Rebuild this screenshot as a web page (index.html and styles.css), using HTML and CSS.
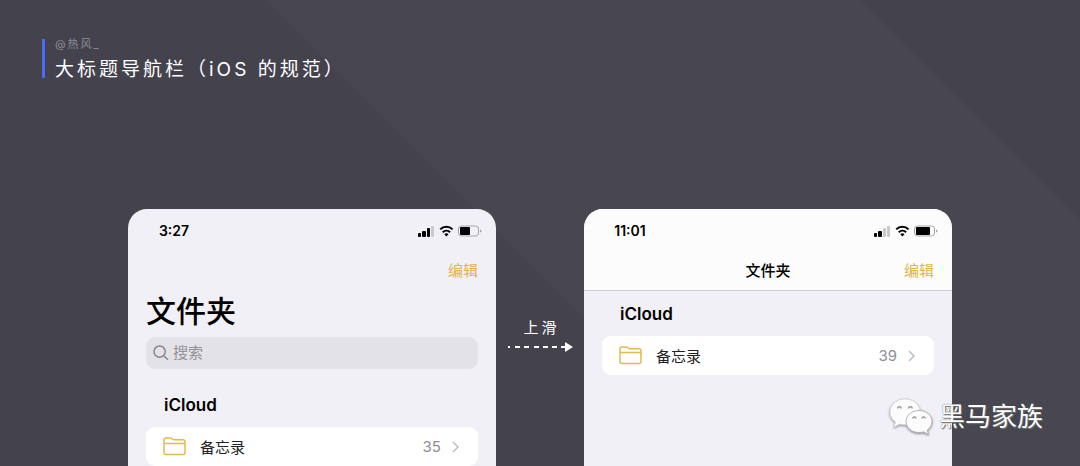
FILE: index.html
```html
<!DOCTYPE html>
<html lang="zh-CN">
<head>
    <meta charset="UTF-8">
    <meta name="viewport" content="width=device-width, initial-scale=1.0">
    <title>大标题导航栏</title>
    <link rel="stylesheet" href="styles.css">
</head>
<body>
    <header class="page-header">
        <p class="author">@热风_</p>
        <h1 class="page-title">大标题导航栏（iOS 的规范）</h1>
    </header>

    <main class="stage">
        <!-- large title -->
        <section class="phone">
            <div class="status-bar">
                <span class="time">3:27</span>
                <svg class="status-icons" width="64" height="12" viewBox="0 0 64 12">
                    <rect x="0" y="8" width="3" height="4" rx="1"/>
                    <rect x="4" y="6" width="4" height="6" rx="1"/>
                    <rect x="9" y="3" width="3" height="9" rx="1"/>
                    <rect class="bar-off" x="13" y="1" width="3" height="11" rx="1"/>
                    <path class="wifi" d="M22.2 4.4a8.8 8.8 0 0 1 12.4 0M24.7 7.2a5.3 5.3 0 0 1 7.4 0"/>
                    <path d="M26.3 9.3a3 3 0 0 1 4.2 0L28.4 11.6z"/>
                    <rect class="battery" x="40.5" y="1" width="20" height="10" rx="3"/>
                    <rect x="42" y="2" width="10" height="8" rx="1"/>
                    <path class="battery-tip" d="M62 4.5q1.5.4 1.5 1.500t-1.500 1.500z"/>
                </svg>
            </div>
            <div class="nav-bar">
                <button class="edit-btn" type="button">编辑</button>
            </div>
            <h2 class="large-title">文件夹</h2>
            <label class="search">
                <svg width="16" height="16" viewBox="0 0 16 16">
                    <circle cx="6.6" cy="6.6" r="5.6"/>
                    <path d="M10.7 10.7L15 14.8"/>
                </svg>
                <input type="search" placeholder="搜索" aria-label="搜索">
            </label>
            <h3 class="group-title">iCloud</h3>
            <a class="folder-row" href="#">
                <svg class="folder" width="23" height="19" viewBox="0 0 23 19">
                    <path d="M1 15.5V3q0-2 2-2h4.500q.8 0 1.400.6l.8.7q.5.5 1.300.5H20q2 0 2 2v10.700q0 2-2 2H3q-2 0-2-2zM1 6.500h21"/>
                </svg>
                <span class="folder-name">备忘录</span>
                <span class="count">35</span>
                <svg class="chevron" width="7" height="12" viewBox="0 0 7 12"><path d="M1 1l5 5-5 5"/></svg>
            </a>
        </section>

        <div class="swipe">
            <span class="swipe-text">上滑</span>
            <svg width="66" height="10" viewBox="0 0 66 10">
                <path class="dashes" d="M1 5h2M8 5h5M17 5h5M27 5h5M36 5h5M45 5h5M54 5h5"/>
                <path class="head" d="M58 0l8 5-8 5z"/>
            </svg>
        </div>

        <!-- collapsed title after scrolling -->
        <section class="phone">
            <div class="compact-header">
                <div class="status-bar">
                    <span class="time">11:01</span>
                    <svg class="status-icons" width="64" height="12" viewBox="0 0 64 12">
                        <rect x="0" y="8" width="3" height="4" rx="1"/>
                        <rect x="4" y="6" width="4" height="6" rx="1"/>
                        <rect class="bar-off" x="9" y="3" width="3" height="9" rx="1"/>
                        <rect class="bar-off" x="13" y="1" width="3" height="11" rx="1"/>
                        <path class="wifi" d="M22.2 4.4a8.8 8.8 0 0 1 12.4 0M24.7 7.2a5.3 5.3 0 0 1 7.4 0"/>
                        <path d="M26.3 9.3a3 3 0 0 1 4.2 0L28.4 11.6z"/>
                        <rect class="battery" x="40.5" y="1" width="20" height="10" rx="3"/>
                        <rect x="42" y="2" width="14" height="8" rx="1"/>
                        <path class="battery-tip" d="M62 4.5q1.5.4 1.5 1.500t-1.500 1.500z"/>
                    </svg>
                </div>
                <div class="nav-bar">
                    <h2 class="small-title">文件夹</h2>
                    <button class="edit-btn" type="button">编辑</button>
                </div>
            </div>
            <h3 class="group-title">iCloud</h3>
            <a class="folder-row" href="#">
                <svg class="folder" width="23" height="19" viewBox="0 0 23 19">
                    <path d="M1 15.5V3q0-2 2-2h4.500q.8 0 1.400.6l.8.7q.5.5 1.300.5H20q2 0 2 2v10.700q0 2-2 2H3q-2 0-2-2zM1 6.500h21"/>
                </svg>
                <span class="folder-name">备忘录</span>
                <span class="count">39</span>
                <svg class="chevron" width="7" height="12" viewBox="0 0 7 12"><path d="M1 1l5 5-5 5"/></svg>
            </a>
        </section>
    </main>

    <div class="watermark">
        <svg width="44" height="38" viewBox="0 0 44 38">
            <path class="bubble" d="M16 1C7.500 1 1 6.800 1 14c0 4.200 2.200 7.700 5.500 10L5 29l5.800-2.900c1.700.5 3.400.7 5.200.7 8.500 0 15-5.600 15-12.800S24.500 1 16 1z"/>
            <path class="eye" d="M8.600 10.500a1.800 1.800 0 0 1 3.600 0M19.600 10.500a1.800 1.800 0 0 1 3.600 0"/>
            <path class="bubble front" d="M30 12.500c-7.300 0-13 4.800-13 11s5.700 11 13 11c1.600 0 3.100-.2 4.500-.6l5 2.400-1.300-4.200c3-2 4.800-5.100 4.800-8.600 0-6.200-5.700-11-13-11z"/>
            <path class="eye" d="M23.800 20.500a1.600 1.600 0 0 1 3.200 0M33 20.500a1.600 1.600 0 0 1 3.200 0"/>
        </svg>
        <span>黑马家族</span>
    </div>
</body>
</html>
```
FILE: styles.css
```css
* { box-sizing: border-box; }
body {
    position: relative;
    display: flex;
    flex-direction: column;
    min-height: 100vh;
    margin: 0;
    font-family: Inter, "Noto Sans CJK SC", sans-serif;
    background: linear-gradient(45deg, #43424d 517px, #474651 517px, #474651 938px, #43424d 938px);
}
h1, h2, h3, p { margin: 0; }

.page-header {
    height: 39px;
    margin: 39px 42px 0;
    padding-left: 10px;
    border-left: 3px solid #4a6cf7;
    color: #fff;
}
.author { font-size: 11px; line-height: 11px; letter-spacing: 2px; color: #8f8e98; }
.page-title { padding-top: 9px; font-size: 19px; line-height: 22px; font-weight: 400; letter-spacing: 3px; }

.stage {
    flex: 1;
    display: grid;
    grid-template-columns: 1fr 88px 1fr;
    padding: 131px 128px 0;
}
.phone {
    overflow: hidden;
    border-radius: 19px 19px 0 0;
    background: #f1f0f6;
    color: #000;
}
.compact-header { background: #fcfcfc; border-bottom: 1px solid #cdcdd1; }
.compact-header .nav-bar { height: 37px; }
.compact-header + .group-title { margin-top: 12px; }

.status-bar {
    display: flex;
    align-items: center;
    justify-content: space-between;
    height: 44px;
    padding: 0 14px 0 16px;
}
.time { width: 60px; text-align: center; font-size: 14px; line-height: 18px; font-weight: 600; }
.bar-off { fill: #c9c9cc; }
.wifi { fill: none; stroke: #000; stroke-width: 2; }
.battery { fill: none; stroke: #a5a5a9; }
.battery-tip { fill: #a5a5a9; }

.nav-bar {
    display: grid;
    grid-template-columns: 1fr auto 1fr;
    align-items: center;
    height: 38px;
    padding: 0 18px 2px;
}
.small-title { grid-column: 2; font-size: 15px; line-height: 22px; font-weight: 500; }
.edit-btn {
    grid-column: 3;
    justify-self: end;
    padding: 0;
    border: none;
    background: none;
    font: inherit;
    font-size: 15px;
    line-height: 22px;
    color: #e0b445;
    cursor: pointer;
}
.large-title { padding: 0 18px; font-size: 30px; line-height: 40px; font-weight: 500; }

.search {
    display: flex;
    align-items: center;
    gap: 4px;
    height: 32px;
    margin: 6px 18px 0;
    padding: 0 7px;
    border-radius: 9px;
    background: #e3e2e7;
}
.search svg { fill: none; stroke: #85858a; stroke-width: 1.5; }
.search input {
    flex: 1;
    min-width: 0;
    padding: 0;
    border: none;
    outline: none;
    background: none;
    font: inherit;
    font-size: 15px;
    line-height: 22px;
}
.search input::placeholder { color: #929197; }

.group-title { margin: 25px 36px 11px; font-size: 17px; line-height: 22px; font-weight: 600; }
.folder-row {
    display: flex;
    align-items: center;
    height: 39px;
    margin: 0 18px;
    padding: 0 19px 0 17px;
    border-radius: 9px;
    background: #fff;
    color: #222;
    font-size: 15px;
    text-decoration: none;
}
.folder { fill: none; stroke: #e5b94f; stroke-width: 1.5; }
.folder-name { flex: 1; margin-left: 14px; }
.count { margin-right: 11px; color: #8e8e93; }
.chevron { fill: none; stroke: #bdbdc1; stroke-width: 1.5; }

.swipe {
    display: flex;
    flex-direction: column;
    align-items: center;
    padding-top: 108px;
    color: #fff;
}
.swipe-text { margin: 0 0 3px 3px; font-size: 15px; line-height: 22px; letter-spacing: 3px; }
.dashes { fill: none; stroke: #fff; stroke-width: 2; }
.head { fill: #fff; }

.watermark {
    position: absolute;
    right: 37px;
    bottom: 30px;
    display: flex;
    align-items: center;
    gap: 6px;
    font-size: 26px;
    line-height: 38px;
    color: #fff;
    text-shadow: 0 0 1px #555, 1px 1px 1px #777;
}
.bubble { fill: #fcfcfc; stroke: #dcdce0; stroke-width: 1; }
.front { stroke: #b5b5b9; }
.watermark svg { filter: drop-shadow(0 1px 1px #88888c); }
.eye { fill: none; stroke: #9a9a9e; stroke-width: 1.5; }
```
